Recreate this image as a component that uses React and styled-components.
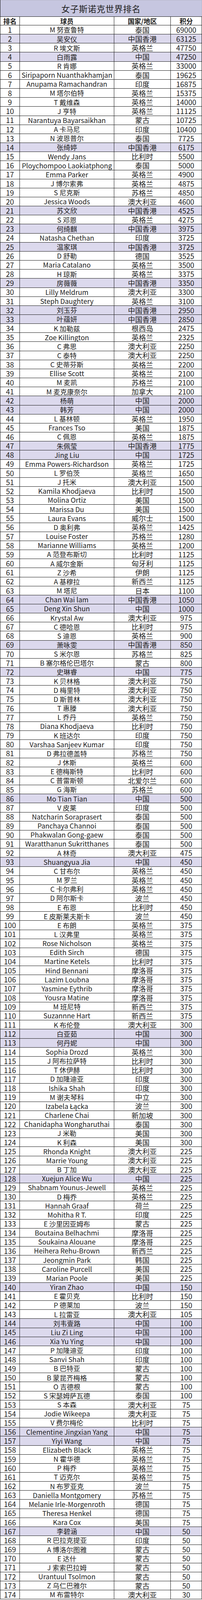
import React from "react";
import styled, { createGlobalStyle } from "styled-components";

const FIT = 4096 / 4598;
const ROW_H = 26 * FIT;
const TITLE_H = 47 * FIT;

const GlobalStyle = createGlobalStyle`
  html, body {
    margin: 0;
    padding: 0;
    background: #ffffff;
  }
  body {
    font-family: "Noto Sans CJK SC", "Noto Sans", sans-serif;
    color: #1c1c1c;
  }
`;

// name|country|score, rank is the line number
const RAW = `M 努查鲁特|泰国|69000
吴安仪|中国香港|63125
R 埃文斯|英格兰|47750
白雨露|中国|47250
R 肯娜|英格兰|33000
Siripaporn Nuanthakhamjan|泰国|19625
Anupama Ramachandran|印度|16875
M 塔尔伯特|英格兰|15375
T 戴维森|英格兰|14000
J 亨特|英格兰|11125
Narantuya Bayarsaikhan|蒙古|10725
A 卡马尼|印度|10400
N 波恩普尔|泰国|7725
张绮婷|中国香港|6175
Wendy Jans|比利时|5500
Ploychompoo Laokiatphong|泰国|5000
Emma Parker|英格兰|4900
J 博尔索弗|英格兰|4875
S 尼克斯|苏格兰|4850
Jessica Woods|澳大利亚|4600
苏文欣|中国香港|4525
S 邓恩|英格兰|4275
何绮麒|中国香港|3975
Natasha Chethan|印度|3725
温家琪|中国香港|3725
D 舒勒|德国|3525
Maria Catalano|英格兰|3500
H 琼斯|英格兰|3375
房薇薇|中国香港|3350
Lilly Meldrum|澳大利亚|3300
Steph Daughtery|英格兰|3100
刘玉芬|中国香港|2950
叶蕴妍|中国香港|2850
K 加勒兹|根西岛|2475
Zoe Killington|英格兰|2325
C 弗思|澳大利亚|2250
C 泰特|澳大利亚|2250
C 史蒂芬斯|英格兰|2200
Ellise Scott|英格兰|2100
M 麦凯|苏格兰|2100
M 麦克康奈尔|加拿大|2100
杨萌|中国|2000
韩芳|中国|2000
L 基林顿|英格兰|1950
Frances Tso|美国|1875
C 佩恩|英格兰|1875
朱佩莹|中国香港|1775
Jing Liu|中国|1725
Emma Powers-Richardson|英格兰|1725
L 罗伯茨|英格兰|1650
J 托米|澳大利亚|1500
Kamila Khodjaeva|比利时|1500
Molina Ortiz|美国|1500
Marissa Du|美国|1500
Laura Evans|威尔士|1500
D 奥利弗|英格兰|1425
Louise Foster|苏格兰|1280
Marianne Williams|英格兰|1200
A 范登布斯切|比利时|1125
A 威尔金斯|匈牙利|1125
Z 沙希|伊朗|1125
A 基穆拉|新西兰|1125
M 塔尼|日本|1100
Chan Wai lam|中国香港|1050
Deng Xin Shun|中国|1000
Krystal Aw|澳大利亚|975
C 德哈恩|比利时|975
S 迪恩|英格兰|900
萧咏雯|中国香港|850
S 米尔恩|苏格兰|825
B 塞尔格伦巴塔尔|蒙古|800
史琳睿|中国|775
K 贝林格|澳大利亚|750
D 梅里特|澳大利亚|750
D 斯普林|澳大利亚|750
T 惠滕|澳大利亚|750
L 乔丹|英格兰|750
Diana Khodjaeva|比利时|750
K 班达尔|印度|750
Varshaa Sanjeev Kumar|印度|750
D 弗拉德盖特|苏格兰|750
J 休斯|英格兰|600
E 德梅斯特|比利时|600
C 普雷斯顿|北爱尔兰|600
G 海斯|苏格兰|600
Mo Tian Tian|中国|500
V 皮莱|印度|500
Natcharin Soraprasert|泰国|500
Panchaya Channoi|泰国|500
Phakwalan Gong-gaew|泰国|500
Waratthanun Sukritthanes|泰国|500
A 林奇|澳大利亚|475
Shuangyua Jia|中国|450
C 甘布尔|英格兰|450
M 罗兰|英格兰|450
C 卡尔弗利|英格兰|450
D 阿尔斯卡|波兰|450
E 布恩|比利时|450
E 皮斯莱夫斯卡|波兰|450
E 布朗|英格兰|375
L 汉弗里|英格兰|375
Rose Nicholson|英格兰|375
Edith Sirch|德国|375
Martine Ketels|比利时|375
Hind Bennani|摩洛哥|375
Lazim Loubna|摩洛哥|375
Yasmine Eythrib|摩洛哥|375
Yousra Matine|摩洛哥|375
M 班尼特|新西兰|375
Suzannne Hart|新西兰|375
K 布伦登|澳大利亚|300
白亚茹|中国|300
何丹妮|中国|300
Sophia Drozd|英格兰|300
J 阿布拉萨特|比利时|300
T 休伊赫|比利时|300
D 加隆迪亚|印度|300
Ishika Shah|印度|300
M 谢夫琴科|中立|300
Izabela Łącka|波兰|300
Charlene Chai|新加坡|300
Chanidapha Wongharuthai|泰国|300
J 米勒|美国|300
K 利森|美国|300
Rhonda Knight|澳大利亚|225
Marrie Young|澳大利亚|225
B 丁加|澳大利亚|225
Xuejun Alice Wu|中国|225
Shabnam Younus-Jewell|英格兰|225
D 梅乔|英格兰|225
Hannah Graaf|荷兰|225
Mohitha R T.|印度|225
E 沙里因亚姆布|蒙古|225
Boutaina Belhachmi|摩洛哥|225
Soukaina Alouane|摩洛哥|225
Heihera Rehu-Brown|新西兰|225
Jeongmin Park|韩国|225
Caroline Purcell|美国|225
Marian Poole|美国|225
Yiran Zhao|中国|150
E 霍贝克|比利时|150
P 德莱加|波兰|150
L 拉雷亚|澳大利亚|105
刘韦壹路|中国|100
Liu Zi Ling|中国|100
Xia Yu Ying|中国|100
P 加隆迪亚|印度|100
Sanvi Shah|印度|100
B 巴特亚|蒙古|100
B 蒙昆齐梅格|蒙古|100
O 吉德根|蒙古|100
S 宋瑟姆萨瓦德|泰国|100
S 本森|澳大利亚|75
Jodie Wikeepa|澳大利亚|75
V 费尔梅伦|比利时|75
Clementine Jingxian Yang|中国|75
Yiyi Wang|中国|75
Elizabeth Black|英格兰|75
N 霍华德|英格兰|75
P 梅乔|英格兰|75
T 迈克尔|英格兰|75
N 布罗亚克|波兰|75
Daniella Montgomery|苏格兰|75
Melanie Irle-Morgenroth|德国|75
Theresa Henkel|德国|75
Kara Cox|美国|75
李碧涵|中国|50
R 巴拉克提亚|印度|50
A 博洛尔图雅|蒙古|50
E 达什|蒙古|50
J 索索巴拉姆|蒙古|50
Urantuul Tsolmon|蒙古|50
Z 乌仁巴雅尔|蒙古|50
M 布雷特尔|澳大利亚|30`;

const players = RAW.split("\n").map((line, i) => {
  const [name, country, score] = line.split("|");
  return { rank: i + 1, name, country, score };
});

const Sheet = styled.div`
  width: 518px;
  box-sizing: border-box;
  border-left: 1px solid #1a1a1a;
`;

const Title = styled.div`
  height: ${TITLE_H}px;
  box-sizing: border-box;
  display: flex;
  align-items: center;
  justify-content: center;
  background: #c6c6e0;
  border-top: 1px solid #b8b8c8;
  border-right: 1px solid #b8b8c8;
  font-size: 22px;
  color: #222;
  letter-spacing: 0.6px;
`;

const Row = styled.div`
  display: grid;
  grid-template-columns: 50px 242px 145px 80px;
  grid-template-rows: 1fr;
  height: ${ROW_H}px;
  box-sizing: border-box;
  border-bottom: 1px solid #1a1a1a;
  border-top: ${(props) => (props.$head ? "1px solid #1a1a1a" : "none")};
  background: ${(props) => (props.$mark ? "#dcd9ed" : "#ffffff")};
`;

const Cell = styled.div`
  box-sizing: border-box;
  min-height: 0;
  border-right: 1px solid #1a1a1a;
  display: flex;
  align-items: center;
  justify-content: center;
  white-space: nowrap;
  font-size: ${(props) => props.$size || "18.5px"};
  font-weight: ${(props) => (props.$head ? 700 : 400)};
  line-height: 1;
  color: #1c1c1c;
`;

export default function App() {
  return (
    <>
      <GlobalStyle />
      <Sheet>
        <Title>女子斯诺克世界排名</Title>
        <Row $head>
          <Cell $head $size="17px">排名</Cell>
          <Cell $head $size="17px">球员</Cell>
          <Cell $head $size="17px">国家/地区</Cell>
          <Cell $head $size="17px">积分</Cell>
        </Row>
        {players.map((p) => (
          <Row key={p.rank} $mark={p.country.startsWith("中国")}>
            <Cell>{p.rank}</Cell>
            <Cell $size="17.5px">{p.name}</Cell>
            <Cell>{p.country}</Cell>
            <Cell>{p.score}</Cell>
          </Row>
        ))}
      </Sheet>
    </>
  );
}
